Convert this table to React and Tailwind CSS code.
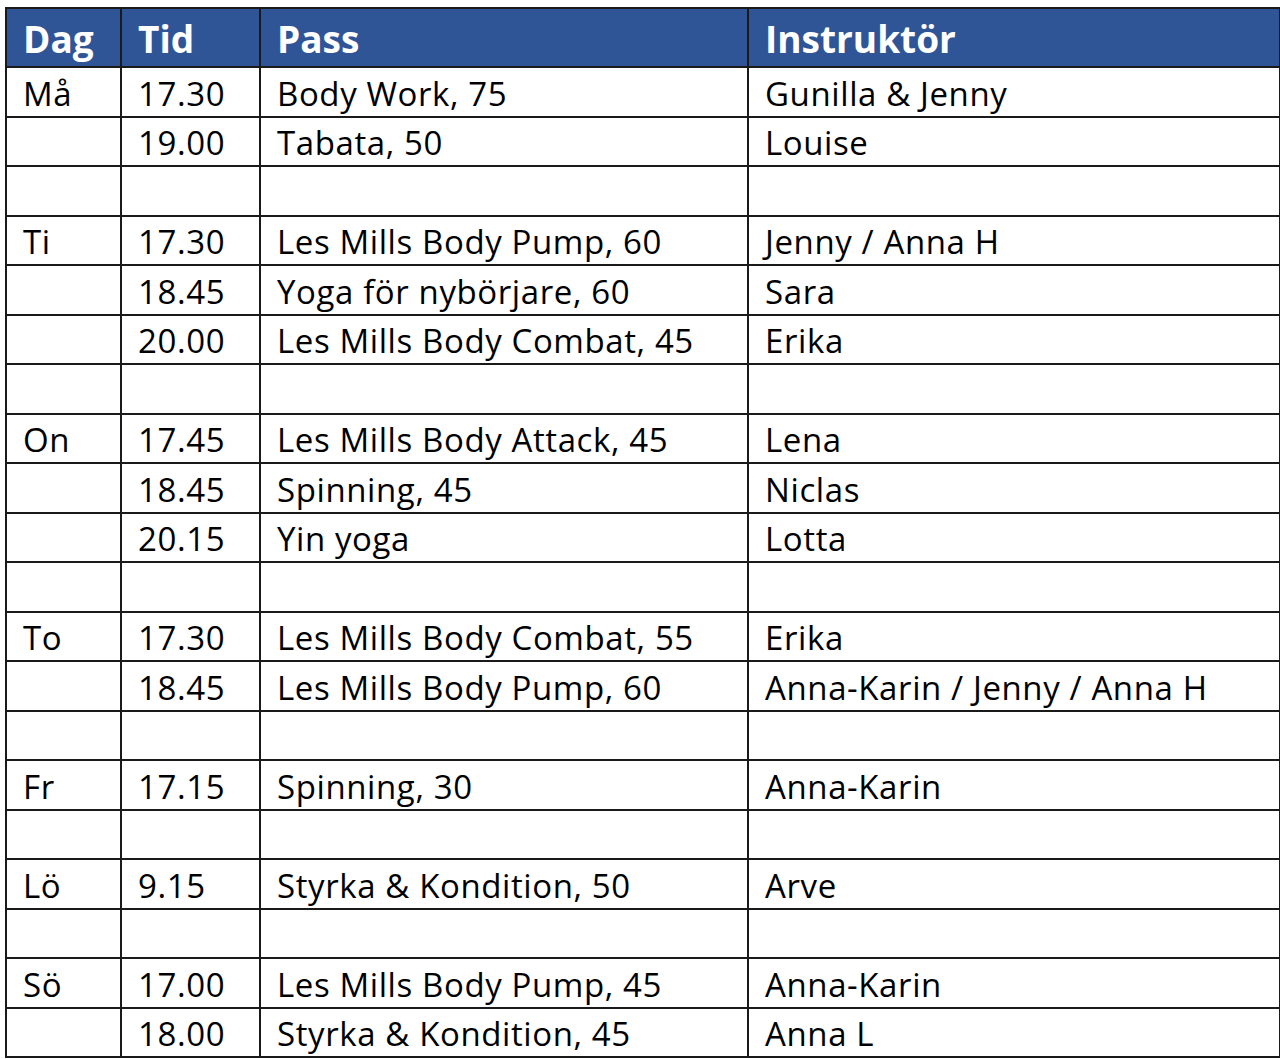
import React from "react";

const rows = [
  ["Må", "17.30", "Body Work, 75", "Gunilla & Jenny"],
  ["", "19.00", "Tabata, 50", "Louise"],
  ["", "", "", ""],
  ["Ti", "17.30", "Les Mills Body Pump, 60", "Jenny / Anna H"],
  ["", "18.45", "Yoga för nybörjare, 60", "Sara"],
  ["", "20.00", "Les Mills Body Combat, 45", "Erika"],
  ["", "", "", ""],
  ["On", "17.45", "Les Mills Body Attack, 45", "Lena"],
  ["", "18.45", "Spinning, 45", "Niclas"],
  ["", "20.15", "Yin yoga", "Lotta"],
  ["", "", "", ""],
  ["To", "17.30", "Les Mills Body Combat, 55", "Erika"],
  ["", "18.45", "Les Mills Body Pump, 60", "Anna-Karin / Jenny / Anna H"],
  ["", "", "", ""],
  ["Fr", "17.15", "Spinning, 30", "Anna-Karin"],
  ["", "", "", ""],
  ["Lö", "9.15", "Styrka & Kondition, 50", "Arve"],
  ["", "", "", ""],
  ["Sö", "17.00", "Les Mills Body Pump, 45", "Anna-Karin"],
  ["", "18.00", "Styrka & Kondition, 45", "Anna L"],
];

export default function App() {
  return (
    <div className="w-[1280px] h-[1059px] bg-white pt-[7px] pl-[5px]" style={{ fontFamily: "'Open Sans', Lato, sans-serif" }}>
      <table className="border-collapse table-fixed w-[1274px] text-[33px] tracking-[0.6px] text-black">
        <colgroup>
          <col className="w-[115px]" />
          <col className="w-[139px]" />
          <col className="w-[488px]" />
          <col className="w-[532px]" />
        </colgroup>
        <thead>
          <tr className="h-[59px] bg-[#2f5597] text-white font-bold text-[37px] tracking-normal">
            {["Dag", "Tid", "Pass", "Instruktör"].map((h) => (
              <th key={h} className="border-2 border-[#1a1a1a] text-left pl-[16px] pt-[2px] leading-none align-middle">
                {h}
              </th>
            ))}
          </tr>
        </thead>
        <tbody>
          {rows.map((r, i) => (
            <tr key={i} className="h-[49.5px]">
              {r.map((c, j) => (
                <td key={j} className="border-2 border-[#1a1a1a] pl-[16px] pt-[3px] leading-none align-middle whitespace-nowrap">
                  {c}
                </td>
              ))}
            </tr>
          ))}
        </tbody>
      </table>
    </div>
  );
}
